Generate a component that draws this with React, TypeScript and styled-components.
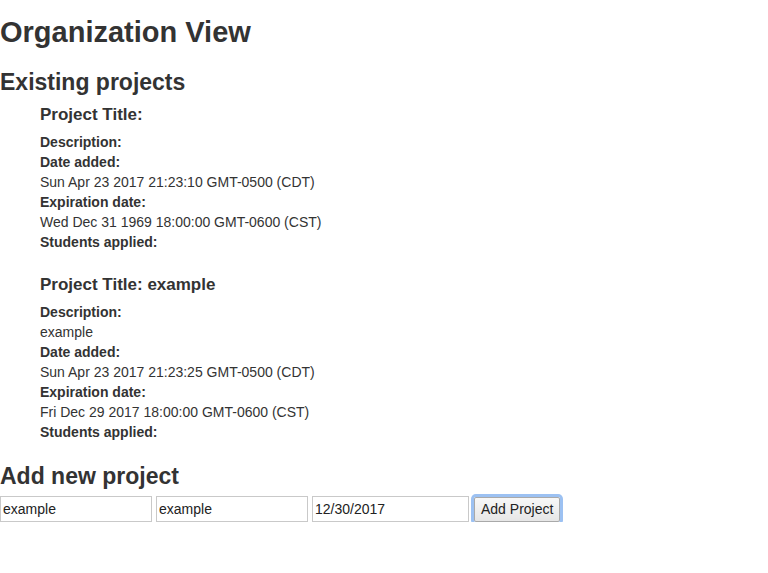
import React from "react";
import styled, { createGlobalStyle } from "styled-components";

const Global = createGlobalStyle`
  html, body { margin: 0; padding: 0; background: #fff; }
  body {
    font-family: "Liberation Sans", Arial, Helvetica, sans-serif;
    font-size: 14px;
    line-height: 20px;
    color: #333;
  }
`;

const Page = styled.div`
  display: flex;
  flex-direction: column;
`;

const Title = styled.h1`
  margin: 16px 0 0;
  font-size: 29px;
  line-height: 33px;
  font-weight: 700;
`;

const Section = styled.h2<{ $top: number }>`
  margin: ${(p) => p.$top}px 0 0;
  font-size: 23px;
  line-height: 26.4px;
  font-weight: 700;
`;

const ProjectList = styled.div`
  display: flex;
  flex-direction: column;
  padding-left: 40px;
  gap: 23px;
  margin-top: 10px;
`;

const Project = styled.div`
  display: flex;
  flex-direction: column;
`;

const ProjectTitle = styled.h4`
  margin: 0 0 7px;
  font-size: 17px;
  line-height: 19.8px;
  font-weight: 700;
`;

const Label = styled.div`
  font-weight: 700;
  line-height: 20px;
`;

const Value = styled.div`
  line-height: 20px;
`;

const Form = styled.form`
  display: flex;
  align-items: center;
  gap: 4px;
  margin-top: 7px;
`;

const Field = styled.input<{ $w: number }>`
  box-sizing: border-box;
  width: ${(p) => p.$w}px;
  height: 26px;
  margin: 0;
  padding: 2px 2px;
  border: 1px solid #c9c9c9;
  border-radius: 0;
  font-family: "Liberation Sans", Arial, sans-serif;
  font-size: 14px;
  color: #222;
  background: #fff;
  outline: none;
`;

const Button = styled.button`
  box-sizing: border-box;
  height: 25px;
  margin-left: 1px;
  padding: 0 6px;
  border: 1px solid #a9a9a9;
  border-radius: 2px;
  background: linear-gradient(#f8f8f8, #e6e6e6);
  font-family: "Liberation Sans", Arial, sans-serif;
  font-size: 14px;
  color: #222;
  box-shadow: 0 0 0 3px #9cc1f2;
`;

type P = {
  title: string;
  description: string;
  added: string;
  expires: string;
};

const projects: P[] = [
  {
    title: "",
    description: "",
    added: "Sun Apr 23 2017 21:23:10 GMT-0500 (CDT)",
    expires: "Wed Dec 31 1969 18:00:00 GMT-0600 (CST)",
  },
  {
    title: "example",
    description: "example",
    added: "Sun Apr 23 2017 21:23:25 GMT-0500 (CDT)",
    expires: "Fri Dec 29 2017 18:00:00 GMT-0600 (CST)",
  },
];

export default function App() {
  return (
    <Page>
      <Global />
      <Title>Organization View</Title>
      <Section $top={20}>Existing projects</Section>
      <ProjectList>
        {projects.map((p, i) => (
          <Project key={i}>
            <ProjectTitle>Project Title: {p.title}</ProjectTitle>
            <Label>Description:</Label>
            {p.description && <Value>{p.description}</Value>}
            <Label>Date added:</Label>
            <Value>{p.added}</Value>
            <Label>Expiration date:</Label>
            <Value>{p.expires}</Value>
            <Label>Students applied:</Label>
          </Project>
        ))}
      </ProjectList>
      <Section $top={21}>Add new project</Section>
      <Form onSubmit={(e) => e.preventDefault()}>
        <Field $w={152} defaultValue="example" />
        <Field $w={152} defaultValue="example" />
        <Field $w={157} defaultValue="12/30/2017" />
        <Button type="submit">Add Project</Button>
      </Form>
    </Page>
  );
}
